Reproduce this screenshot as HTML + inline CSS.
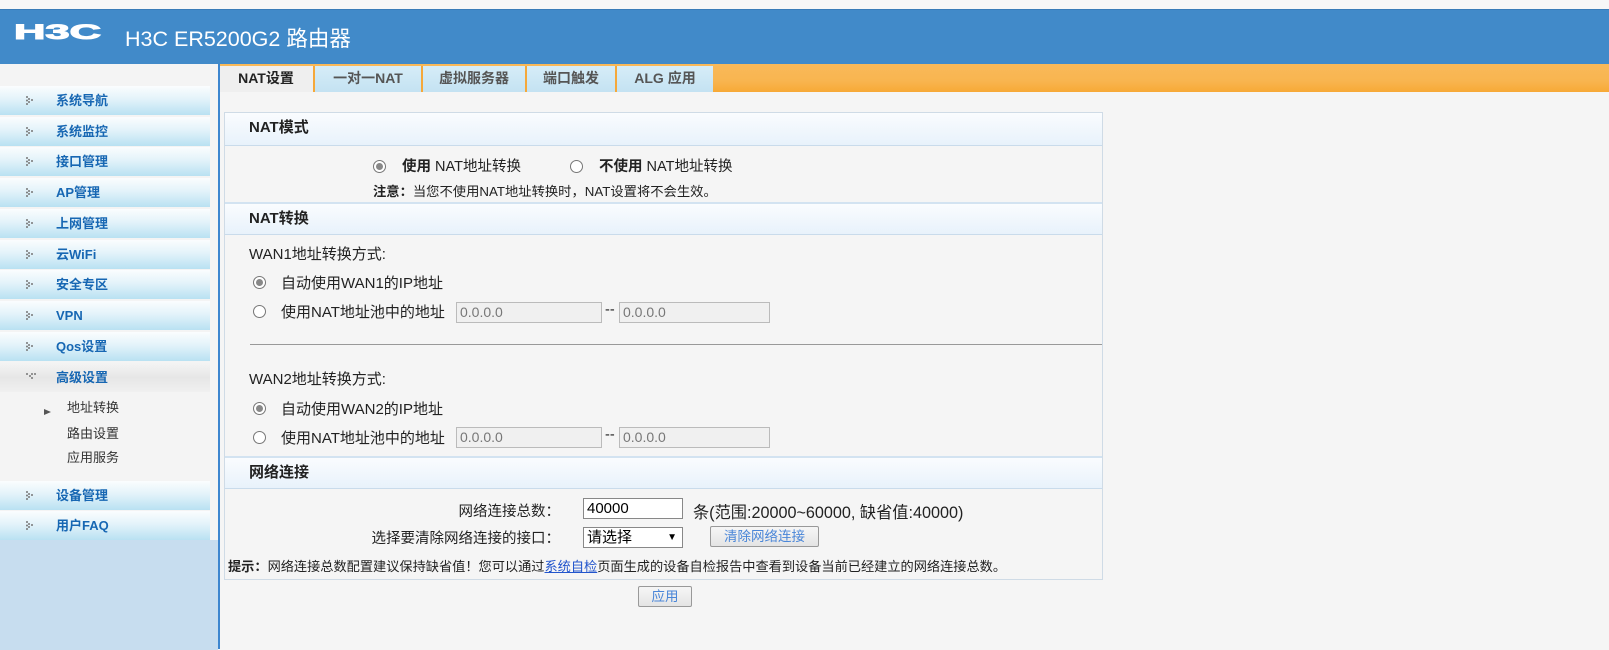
<!DOCTYPE html>
<html><head><meta charset="utf-8"><style>
*{margin:0;padding:0;box-sizing:border-box}
body{width:1609px;height:649px;background:#f5f5f5;font-family:"Liberation Sans","Noto Sans CJK SC",sans-serif;font-size:14.5px;color:#222;position:relative;overflow:hidden}
.a{position:absolute;white-space:nowrap}
#top{left:0;top:0;width:1609px;height:9px;background:#f7f7f7}
#hdr{left:0;top:9px;width:1609px;height:55px;background:#418ac9;border-top:1px solid #3a7cb8}
#org{left:219px;top:64px;width:1390px;height:28px;background:linear-gradient(#f9b959,#f8b550 60%,#f7a936)}
.tab{position:absolute;top:66px;height:26px;background:linear-gradient(#d6edf8,#c4e2f2);font-weight:bold;font-size:14px;color:#555;text-align:center;line-height:24px;border-left:2px solid #f5a83a}
.tab.on{background:#efefef;color:#222;border-left:none}
#side{left:0;top:64px;width:220px;height:585px;background:#f4f4f4;border-right:2px solid #3d86cf}
.it{position:absolute;left:0;width:210px;height:29px;background:linear-gradient(#fbfdfe,#e3f3fa 45%,#b9e1f2);color:#1767b3;font-weight:bold;font-size:13px;line-height:29px;padding-left:56px}
.it svg{position:absolute;left:26px;top:10px}
.sub{position:absolute;left:67px;font-size:13px;color:#333}
#panel{left:224px;top:112px;width:879px;height:468px;border:1px solid #cfdbe6;background:#f5f5f5}
.sh{position:absolute;left:0;width:877px;height:33px;background:linear-gradient(#fafcfe,#e8f2fb);border-bottom:1px solid #c9dbeb;font-weight:bold;font-size:15px;line-height:30px;padding-left:24px}
.sh2{border-top:2px solid #d3e3f1}
.rad{position:absolute;width:13px;height:13px;border:1px solid #777;border-radius:50%;background:#fff}
.rad.c::after{content:"";position:absolute;left:2px;top:2px;width:7px;height:7px;border-radius:50%;background:#888}
.inp{position:absolute;height:21px;border:1px solid #bbb;background:#f0f0f0;color:#777;font-size:14px;line-height:19px;padding-left:3px}
.btn{position:absolute;border:1px solid #999;border-radius:2px;background:linear-gradient(#f6f6f6,#e4e4e4);color:#4a86d8;font-size:13.5px;text-align:center;line-height:19px}
.r{position:absolute;text-align:right;width:335px;left:0}
</style></head><body>
<svg width="0" height="0" style="position:absolute"><defs><g id="ic" fill="#777"><circle cx="1" cy="1" r="1"/><circle cx="3" cy="3" r="1"/><circle cx="1" cy="4.5" r="1"/><circle cx="6" cy="4" r="1"/><circle cx="3" cy="6" r="1"/><circle cx="1" cy="8" r="1"/></g></defs></svg>
<div class="a" id="top"></div>
<div class="a" id="hdr">
<svg class="a" style="left:14px;top:12px" width="92" height="20"><text x="0" y="17" font-family="Liberation Sans" font-weight="bold" font-size="21" fill="#fff" stroke="#fff" stroke-width="1" textLength="87" lengthAdjust="spacingAndGlyphs">H3C</text></svg>
<div class="a" style="left:125px;top:12px;font-size:21.5px;color:#fff">H3C ER5200G2 路由器</div>
</div>
<div class="a" id="org"></div>
<div class="tab on" style="left:219px;width:94px">NAT设置</div>
<div class="tab" style="left:313px;width:108px">一对一NAT</div>
<div class="tab" style="left:421px;width:104px">虚拟服务器</div>
<div class="tab" style="left:525px;width:90px">端口触发</div>
<div class="tab" style="left:615px;width:98px">ALG 应用</div>

<div class="a" id="side">
<div class="it" style="top:22px"><svg width="8" height="10"><use href="#ic"/></svg>系统导航</div>
<div class="it" style="top:53px"><svg width="8" height="10"><use href="#ic"/></svg>系统监控</div>
<div class="it" style="top:83px"><svg width="8" height="10"><use href="#ic"/></svg>接口管理</div>
<div class="it" style="top:114px"><svg width="8" height="10"><use href="#ic"/></svg>AP管理</div>
<div class="it" style="top:145px"><svg width="8" height="10"><use href="#ic"/></svg>上网管理</div>
<div class="it" style="top:176px"><svg width="8" height="10"><use href="#ic"/></svg>云WiFi</div>
<div class="it" style="top:206px"><svg width="8" height="10"><use href="#ic"/></svg>安全专区</div>
<div class="it" style="top:237px"><svg width="8" height="10"><use href="#ic"/></svg>VPN</div>
<div class="it" style="top:268px"><svg width="8" height="10"><use href="#ic"/></svg>Qos设置</div>
<div class="it" style="top:299px;background:linear-gradient(#f4f4f4,#e6e6e6 50%,#f0f0f0)"><svg width="10" height="8" fill="#777"><circle cx="1" cy="1" r="1"/><circle cx="4" cy="3" r="1"/><circle cx="6" cy="1" r="1"/><circle cx="9" cy="1" r="1"/><circle cx="6" cy="5" r="1"/></svg>高级设置</div>
<div class="a" style="left:44px;top:339px;width:8px;height:6px"><svg width="8" height="6"><path d="M0 0L7 3L0 6Z" fill="#555"/></svg></div>
<div class="sub" style="top:333px">地址转换</div>
<div class="sub" style="top:359px">路由设置</div>
<div class="sub" style="top:383px">应用服务</div>
<div class="it" style="top:417px"><svg width="8" height="10"><use href="#ic"/></svg>设备管理</div>
<div class="it" style="top:447px"><svg width="8" height="10"><use href="#ic"/></svg>用户FAQ</div>
<div class="a" style="left:0;top:476px;width:218px;height:110px;background:#c7ddef"></div>
</div>

<div class="a" id="panel">
<div class="sh" style="top:0">NAT模式</div>
<div class="rad c" style="left:148px;top:47px"></div>
<div class="a" style="left:177px;top:42px"><b>使用</b> NAT地址转换</div>
<div class="rad" style="left:345px;top:47px"></div>
<div class="a" style="left:374px;top:42px"><b>不使用</b> NAT地址转换</div>
<div class="a" style="left:148px;top:68px;font-size:13.3px"><b>注意：</b>当您不使用NAT地址转换时，NAT设置将不会生效。</div>
<div class="sh sh2" style="top:89px">NAT转换</div>
<div class="a" style="left:24px;top:130px;font-size:15px">WAN1地址转换方式:</div>
<div class="rad c" style="left:28px;top:163px"></div>
<div class="a" style="left:56px;top:159px;font-size:15px">自动使用WAN1的IP地址</div>
<div class="rad" style="left:28px;top:192px"></div>
<div class="a" style="left:56px;top:188px;font-size:15px">使用NAT地址池中的地址</div>
<div class="inp" style="left:231px;top:189px;width:146px">0.0.0.0</div>
<div class="a" style="left:380px;top:189px">--</div>
<div class="inp" style="left:394px;top:189px;width:151px">0.0.0.0</div>
<div class="a" style="left:25px;top:231px;width:852px;height:1px;background:#999"></div>
<div class="a" style="left:24px;top:255px;font-size:15px">WAN2地址转换方式:</div>
<div class="rad c" style="left:28px;top:289px"></div>
<div class="a" style="left:56px;top:285px;font-size:15px">自动使用WAN2的IP地址</div>
<div class="rad" style="left:28px;top:318px"></div>
<div class="a" style="left:56px;top:314px;font-size:15px">使用NAT地址池中的地址</div>
<div class="inp" style="left:231px;top:314px;width:146px">0.0.0.0</div>
<div class="a" style="left:380px;top:314px">--</div>
<div class="inp" style="left:394px;top:314px;width:151px">0.0.0.0</div>
<div class="sh sh2" style="top:343px">网络连接</div>
<div class="r" style="top:387px">网络连接总数：</div>
<div class="inp" style="left:358px;top:385px;width:100px;background:#fff;color:#000;border-color:#888;font-size:15px">40000</div>
<div class="a" style="left:468px;top:386px;font-size:16.2px">条(范围:20000~60000, 缺省值:40000)</div>
<div class="r" style="top:414px">选择要清除网络连接的接口：</div>
<div class="inp" style="left:358px;top:414px;width:100px;background:#fff;color:#000;border-color:#888;font-size:15px">请选择<span style="position:absolute;right:5px;top:0;font-size:10px">▼</span></div>
<div class="btn" style="left:485px;top:413px;width:109px;height:21px">清除网络连接</div>
<div class="a" style="left:3px;top:443px;font-size:13.2px"><b>提示：</b>网络连接总数配置建议保持缺省值！您可以通过<span style="color:#2255cc;text-decoration:underline">系统自检</span>页面生成的设备自检报告中查看到设备当前已经建立的网络连接总数。</div>
</div>
<div class="btn" style="left:638px;top:586px;width:54px;height:21px">应用</div>
</body></html>
